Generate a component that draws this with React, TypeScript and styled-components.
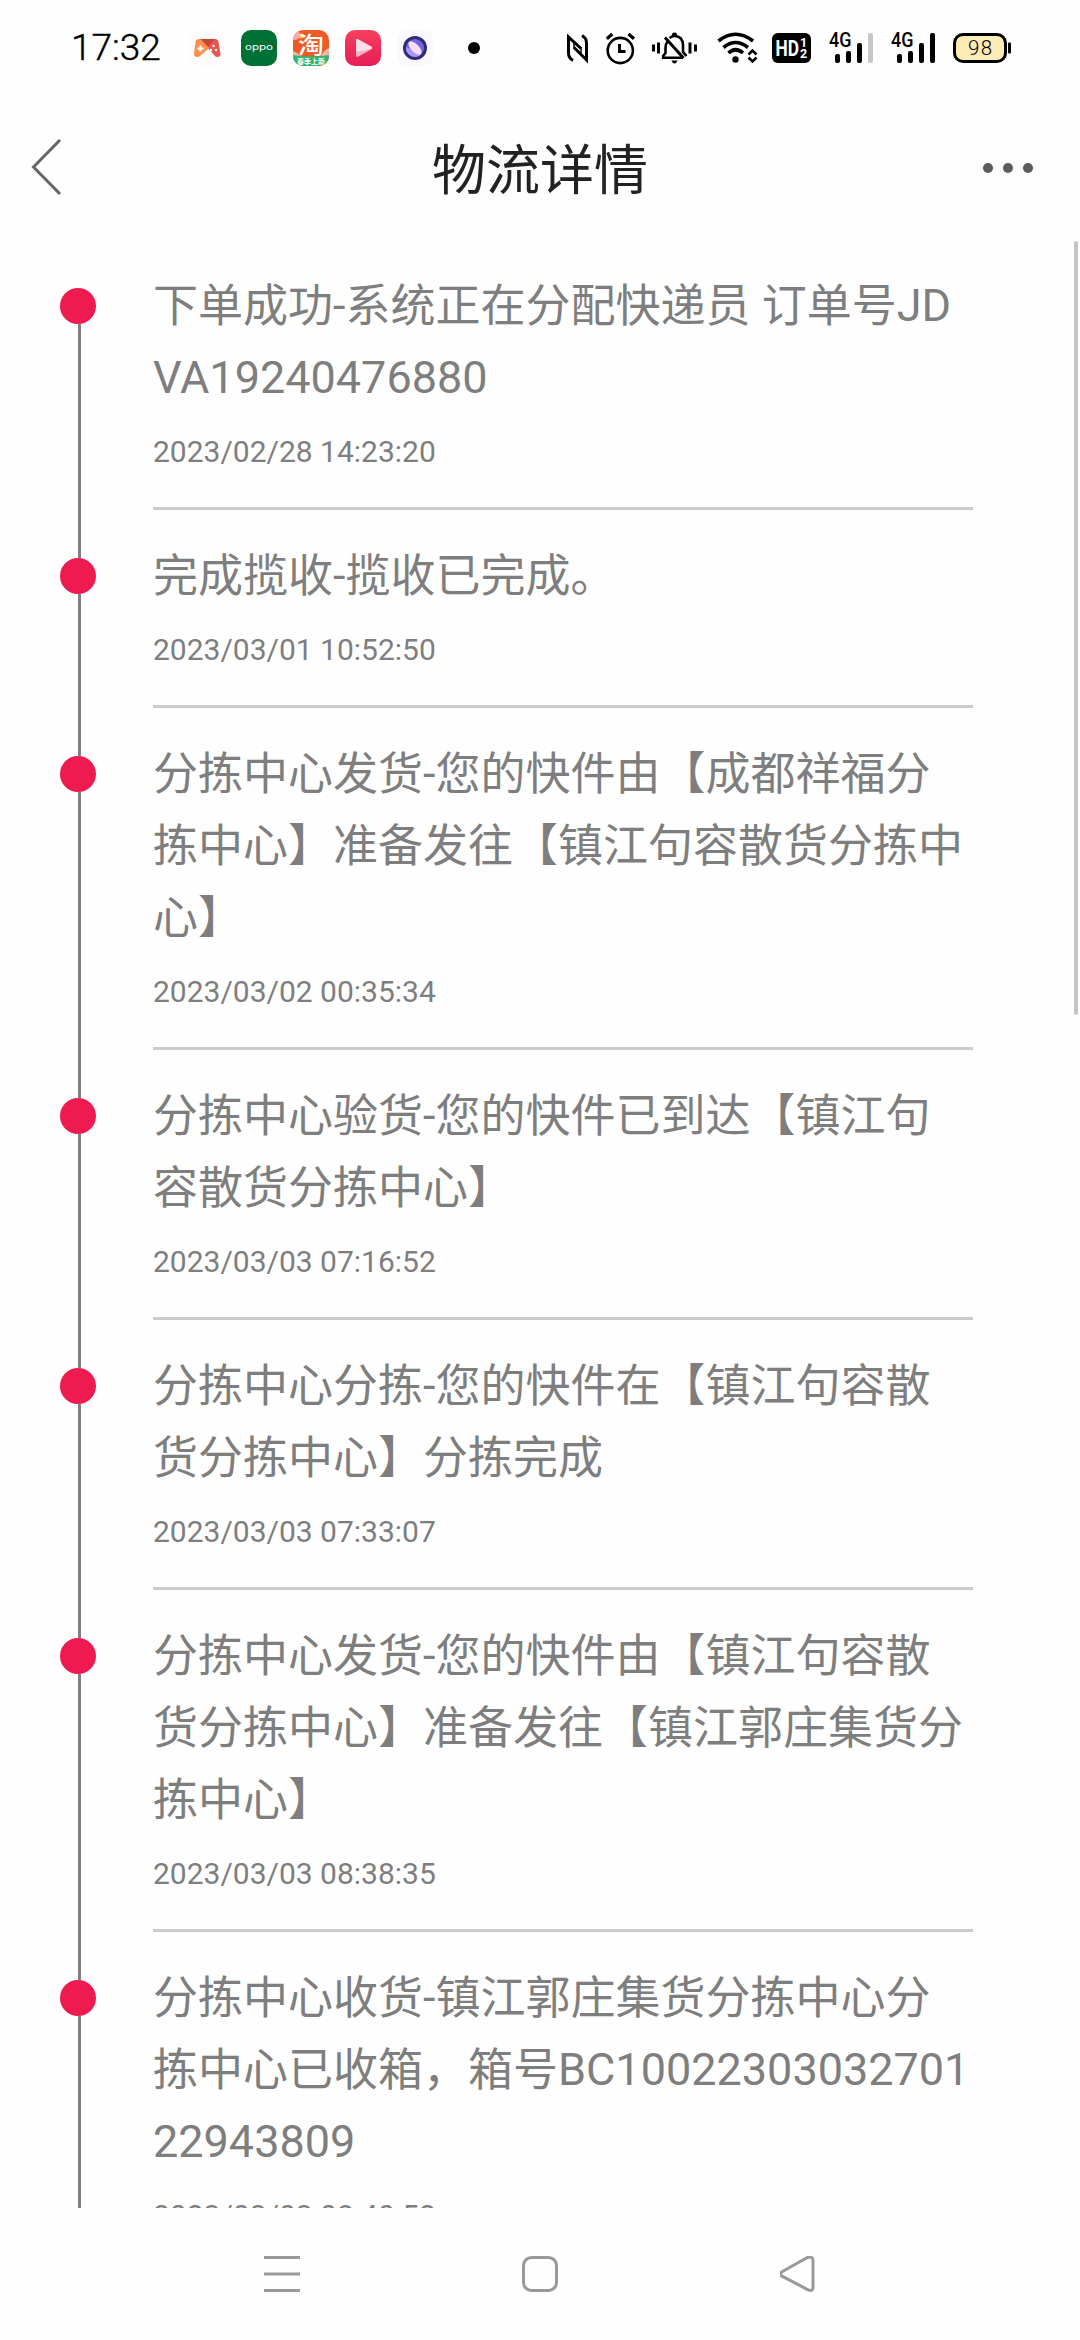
import React from "react";
import styled, { createGlobalStyle } from "styled-components";

const GlobalStyle = createGlobalStyle`
  * { box-sizing: border-box; }
  body { margin: 0; background: #fefefe; }
`;

const sans = `Roboto, "Noto Sans CJK SC", sans-serif`;

const Screen = styled.div`
  width: 1080px;
  height: 2340px;
  display: flex;
  flex-direction: column;
  overflow: hidden;
  background: #fefefe;
  font-family: ${sans};
`;

const StatusBar = styled.div`
  height: 96px;
  display: flex;
  justify-content: space-between;
  align-items: center;
  padding: 0 69px 0 71px;
`;

const StatusGroup = styled.div`
  display: flex;
  align-items: center;
`;

const Clock = styled.div`
  width: 118px;
  font-size: 37px;
  font-weight: 300;
  line-height: 44px;
  color: #000;
  -webkit-text-stroke: 0.4px #000;
`;

const AppIcons = styled.div`
  display: flex;
  gap: 16px;
`;

const AppIcon = styled.svg`
  display: block;
  width: 36px;
  height: 36px;
`;

const MoreDot = styled.div`
  width: 12px;
  height: 12px;
  margin-left: 35px;
  border-radius: 50%;
  background: #000;
`;

const Glyph = styled.svg<{ $w: number; $gap: number }>`
  display: block;
  width: ${(p) => p.$w}px;
  height: 32px;
  margin-right: ${(p) => p.$gap}px;
  overflow: visible;
`;

const Header = styled.header`
  height: 144px;
  display: grid;
  grid-template-columns: 200px 1fr 200px;
  align-items: center;
  padding: 0 47px 0 30px;
`;

const BackIcon = styled.svg`
  width: 32px;
  height: 56px;
  margin-bottom: 2px;
`;

const Title = styled.h1`
  margin: 0 0 0 17px;
  padding-top: 8px;
  font-size: 54px;
  font-weight: 400;
  line-height: 72px;
  text-align: center;
  color: #222;
`;

const MoreButton = styled.div`
  display: flex;
  gap: 10px;
  justify-content: flex-end;
`;

const MoreButtonDot = styled.span`
  width: 10px;
  height: 10px;
  border-radius: 50%;
  background: #5c5d58;
`;

const Content = styled.main`
  height: 1968px;
  display: flex;
  justify-content: space-between;
  overflow: hidden;
`;

const List = styled.ol`
  margin: 0;
  padding: 0;
  list-style: none;
`;

const Row = styled.li`
  display: grid;
  grid-template-columns: 36px 840px;
  column-gap: 57px;
  padding-left: 60px;
`;

const Track = styled.div`
  display: flex;
  flex-direction: column;
  align-items: center;
`;

const Line = styled.div<{ $lead?: boolean; $hidden?: boolean }>`
  width: 3px;
  margin-left: 3px;
  flex: ${(p) => (p.$lead ? "0 0 48px" : "1")};
  background: ${(p) => (p.$hidden ? "transparent" : "#808080")};
`;

const Dot = styled.div`
  width: 36px;
  height: 36px;
  border-radius: 50%;
  background: #ee1a50;
`;

const Entry = styled.div`
  width: 820px;
  padding-top: 30px;
  border-bottom: 3px solid #cbcbcb;
`;

const Message = styled.p`
  margin: 0;
  font-size: 45px;
  line-height: 72px;
  color: #7e7e7e;
`;

const MessageLine = styled.span`
  display: block;
  height: 72px;
  white-space: pre;
`;

const Han = styled.span`
  line-height: 1;
  vertical-align: -1px;
`;

const Time = styled.time`
  display: block;
  height: 93px;
  padding-top: 15px;
  font-size: 30px;
  line-height: 45px;
  color: #7e7e7e;
`;

const ScrollThumb = styled.div`
  width: 4px;
  height: 774px;
  margin: 1px 2px 0 0;
  border-radius: 2px;
  background: #c4c4c4;
`;

const NavBar = styled.nav`
  flex: 1;
  display: flex;
  justify-content: space-between;
  align-items: center;
  padding: 0 264px;
`;

const NavIcon = styled.svg`
  display: block;
  width: 36px;
  height: 36px;
  fill: none;
  stroke: #999;
  stroke-width: 3px;
`;

const entries = [
  { lines: ["下单成功-系统正在分配快递员 订单号JD", "VA19240476880"], time: "2023/02/28 14:23:20" },
  { lines: ["完成揽收-揽收已完成。"], time: "2023/03/01 10:52:50" },
  { lines: ["分拣中心发货-您的快件由【成都祥福分", "拣中心】准备发往【镇江句容散货分拣中", "心】"], time: "2023/03/02 00:35:34" },
  { lines: ["分拣中心验货-您的快件已到达【镇江句", "容散货分拣中心】"], time: "2023/03/03 07:16:52" },
  { lines: ["分拣中心分拣-您的快件在【镇江句容散", "货分拣中心】分拣完成"], time: "2023/03/03 07:33:07" },
  { lines: ["分拣中心发货-您的快件由【镇江句容散", "货分拣中心】准备发往【镇江郭庄集货分", "拣中心】"], time: "2023/03/03 08:38:35" },
  { lines: ["分拣中心收货-镇江郭庄集货分拣中心分", "拣中心已收箱，箱号BC10022303032701", "22943809"], time: "2023/03/03 08:40:52" },
];

/* Han glyphs sit one pixel lower than the Latin baseline. */
function MixedText({ text }: { text: string }) {
  const runs = text.split(/([^\x00-\x7f]+)/).filter(Boolean);
  return (
    <MessageLine>
      {runs.map((run, i) => (run.charCodeAt(0) > 127 ? <Han key={i}>{run}</Han> : run))}
    </MessageLine>
  );
}

function GameIcon() {
  return (
    <AppIcon viewBox="0 0 36 36">
      <rect width="36" height="36" rx="10" fill="#fdfbfb" />
      <path d="M10 9h16q3 0 3.500 3l2 12q0 3-3 3-2 0-3-1.500L18 17z" fill="#e8574f" />
      <path d="M12 9h14l-8 9z" fill="#c9453f" />
      <path d="M10 9q-3 0-3.500 3L5 24q0 3 3 3 2 0 3-1l9-8L12 9.500z" fill="#fb8f4d" />
      <path d="M11.500 15.500v6M8.500 18.500h6" stroke="#fff" strokeWidth="2" />
      <circle cx="24.500" cy="16" r="1.200" fill="#fff" />
      <circle cx="22" cy="20" r="1.200" fill="#fff" />
      <circle cx="27" cy="20" r="1.200" fill="#fff" />
    </AppIcon>
  );
}

function OppoIcon() {
  return (
    <AppIcon viewBox="0 0 36 36">
      <rect width="36" height="36" rx="10" fill="#007134" />
      <text x="4" y="20" fontFamily="Inter, sans-serif" fontSize="8.500" fill="#fff" textLength="28" lengthAdjust="spacingAndGlyphs">oppo</text>
    </AppIcon>
  );
}

function TaobaoIcon() {
  return (
    <AppIcon viewBox="0 0 36 36">
      <defs>
        <clipPath id="tb"><rect width="36" height="36" rx="10" /></clipPath>
      </defs>
      <g clipPath="url(#tb)">
        <rect width="36" height="36" fill="#ee5a26" />
        <circle cx="2" cy="5" r="5" fill="#f6a7b4" />
        <circle cx="8" cy="6" r="2.500" fill="#f7c243" />
        <path d="M0 21q5 2 8 5H0zM36 18q-5 2-8 8h8z" fill="#f6b6a6" />
        <path d="M0 25q18 3 36 0v11H0z" fill="#2fb673" />
        <text x="5" y="22.500" fontFamily="Noto Sans CJK SC, sans-serif" fontWeight="500" fontSize="23" fill="#fff" textLength="26" lengthAdjust="spacingAndGlyphs">淘</text>
        <text x="4" y="34" fontFamily="Noto Sans CJK SC, sans-serif" fontWeight="700" fontSize="7" fill="#fff" textLength="28" lengthAdjust="spacingAndGlyphs">春季上新</text>
      </g>
    </AppIcon>
  );
}

function VideoIcon() {
  return (
    <AppIcon viewBox="0 0 36 36">
      <defs>
        <linearGradient id="vr" x1="0" y1="0" x2="0" y2="1">
          <stop offset="0" stopColor="#f7405f" />
          <stop offset="1" stopColor="#e61c55" />
        </linearGradient>
      </defs>
      <rect width="36" height="36" rx="10" fill="url(#vr)" />
      <path d="M11 10.500q0-2 2-1.200l13.500 7.500q1.500 1.200 0 2.400L13 26.700q-2 .8-2-1.200z" fill="#fbb3c1" />
      <path d="M11 10.500q0-2 2-1.200l13.500 7.500q1 .8.600 1.700L11 22z" fill="#fde0e5" />
    </AppIcon>
  );
}

function BrowserIcon() {
  return (
    <AppIcon viewBox="0 0 36 36">
      <rect width="36" height="36" rx="10" fill="#f9f8fa" />
      <circle cx="18" cy="18" r="12" fill="#322a78" />
      <circle cx="18" cy="18" r="9" fill="#7468d6" />
      <path d="M9 17a9 9 0 0 0 9 10q4 0 6-3z" fill="#a79af0" />
      <ellipse cx="18" cy="18" rx="8.500" ry="4" transform="rotate(45 18 18)" fill="#f6dcf8" />
    </AppIcon>
  );
}

function NfcGlyph() {
  return (
    <Glyph $w={21} $gap={18} viewBox="0 0 21 32" fill="none" stroke="#000" strokeWidth="3">
      <path d="M6 28.500Q1.500 26 1.500 21V5L14 16.500" />
      <path d="M15 3.500Q19.500 6 19.500 11v17L7 15.500" />
      <path d="M7 11v5.500M14 15v6" strokeWidth="1.500" />
    </Glyph>
  );
}

function AlarmGlyph() {
  return (
    <Glyph $w={29} $gap={17} viewBox="0 0 29 32" fill="none" stroke="#000" strokeWidth="2.600">
      <circle cx="14.300" cy="18.500" r="12.600" />
      <path d="M.8 6.800 6.300 2M28 6.800 22.500 2" strokeWidth="3.200" />
      <path d="M13.500 12v7.500h6" strokeWidth="3" />
    </Glyph>
  );
}

function MuteGlyph() {
  return (
    <Glyph $w={45} $gap={20} viewBox="0 0 45 32" fill="none" stroke="#000" strokeWidth="2.600">
      <path d="M1.500 12.500v7M6.500 10.500v11M38 10.500v11M43.500 12.500v7" strokeWidth="3" />
      <path d="M15.500 9.500Q13.500 12 13.500 16v5l-2.300 3v1.800h19.500" />
      <path d="M17.500 6Q20 4 22.500 4q8 0 8.500 9v7l3.500 4" />
      <path d="M13 5.500 31.500 26" strokeWidth="3" />
      <path d="M19.800 3.500q0-3 2.700-3t2.700 3zM19.500 28.500h6q-1 3-3 3t-3-3z" fill="#000" stroke="none" />
    </Glyph>
  );
}

function WifiGlyph() {
  return (
    <Glyph $w={40} $gap={15} viewBox="0 0 40 32" fill="none" stroke="#000" strokeWidth="3.600">
      <path d="M1.500 9Q18.500-4.500 36 9" />
      <path d="M6.500 15.500Q18.500 5.500 31 15.500" />
      <path d="M11.500 21Q18.500 14.500 26 21" />
      <circle cx="18.500" cy="27.500" r="3.200" fill="#000" stroke="none" />
      <path d="M31.500 22.500l4-4 4 4M31.500 25.500l4 4 4-4" strokeWidth="2.600" />
    </Glyph>
  );
}

function HdGlyph() {
  return (
    <Glyph $w={39} $gap={18} viewBox="0 0 39 32">
      <rect y="1" width="39" height="30" rx="6" fill="#000" />
      <g fill="#fff" fontFamily="Roboto, sans-serif" fontWeight="700">
        <text x="3.500" y="23.700" fontSize="22" textLength="23.500" lengthAdjust="spacingAndGlyphs">HD</text>
        <text x="28" y="14.500" fontSize="12.500">1</text>
        <text x="28" y="26.300" fontSize="12.500">2</text>
      </g>
    </Glyph>
  );
}

function SignalGlyph({ weak, gap }: { weak?: boolean; gap: number }) {
  return (
    <Glyph $w={44} $gap={gap} viewBox="0 0 44 32">
      <text x="0" y="15" fontFamily="Roboto, sans-serif" fontWeight="500" fontSize="19.500" textLength="22.500" lengthAdjust="spacingAndGlyphs">4G</text>
      <rect x="6" y="22" width="5" height="9" rx="2" />
      <rect x="17" y="19" width="5" height="12" rx="2" />
      <rect x="28" y="11" width="5" height="20" rx="2" />
      <rect x="39" y="1" width="5" height="30" rx="2" fill={weak ? "#c8c8c8" : "#000"} />
    </Glyph>
  );
}

function BatteryGlyph() {
  return (
    <Glyph $w={58} $gap={0} viewBox="0 0 58 32">
      <rect x="1.500" y="2.500" width="51" height="27" rx="8.500" fill="#fdebb5" stroke="#000" strokeWidth="3" />
      <rect x="55" y="10.500" width="3" height="11" rx="1" />
      <text x="15" y="23" fontFamily="Roboto, sans-serif" fontWeight="300" fontSize="20.500" textLength="24" lengthAdjust="spacing">98</text>
    </Glyph>
  );
}

export default function App() {
  return (
    <Screen>
      <GlobalStyle />
      <StatusBar>
        <StatusGroup>
          <Clock>17:32</Clock>
          <AppIcons>
            <GameIcon />
            <OppoIcon />
            <TaobaoIcon />
            <VideoIcon />
            <BrowserIcon />
          </AppIcons>
          <MoreDot />
        </StatusGroup>
        <StatusGroup>
          <NfcGlyph />
          <AlarmGlyph />
          <MuteGlyph />
          <WifiGlyph />
          <HdGlyph />
          <SignalGlyph weak gap={18} />
          <SignalGlyph gap={18} />
          <BatteryGlyph />
        </StatusGroup>
      </StatusBar>
      <Header>
        <BackIcon viewBox="0 0 32 56" fill="none" stroke="#666" strokeWidth="3">
          <path d="M30 1 3.500 28 30 55" />
        </BackIcon>
        <Title>物流详情</Title>
        <MoreButton>
          <MoreButtonDot />
          <MoreButtonDot />
          <MoreButtonDot />
        </MoreButton>
      </Header>
      <Content>
        <List>
          {entries.map((e, i) => (
            <Row key={e.time}>
              <Track>
                <Line $lead $hidden={i === 0} />
                <Dot />
                <Line />
              </Track>
              <Entry>
                <Message>
                  {e.lines.map((line) => (
                    <MixedText key={line} text={line} />
                  ))}
                </Message>
                <Time>{e.time}</Time>
              </Entry>
            </Row>
          ))}
        </List>
        <ScrollThumb />
      </Content>
      <NavBar>
        <NavIcon viewBox="0 0 36 36">
          <path d="M0 1.500h36M0 18h36M0 34.500h36" />
        </NavIcon>
        <NavIcon viewBox="0 0 36 36">
          <rect x="1.500" y="1.500" width="33" height="33" rx="8" />
        </NavIcon>
        <NavIcon viewBox="0 0 36 36">
          <path d="M2 15.800 27.500 1.500Q33 0 33 4.500v27q0 4-4.500 2.500L2 20.200q-3-2.200 0-4.400z" />
        </NavIcon>
      </NavBar>
    </Screen>
  );
}
